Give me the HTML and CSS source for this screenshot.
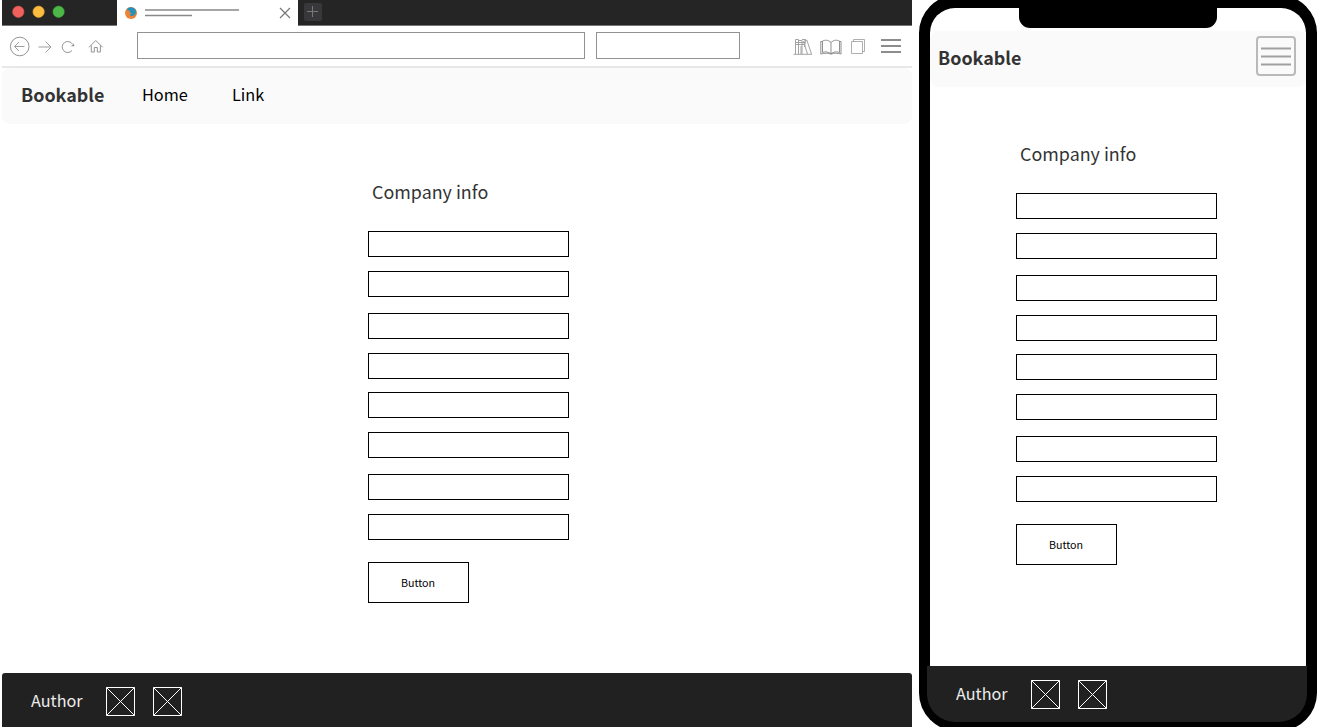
FILE: index.html
```html
<!DOCTYPE html>
<html lang="en">
<head>
<meta charset="utf-8">
<title>Bookable</title>
<link rel="stylesheet" href="styles.css">
</head>
<body>
<main class="board">
  <section class="browser">
    <div class="tabbar">
      <div class="lights">
        <svg width="60" height="26" viewBox="0 0 60 26"><circle cx="7.3" cy="11.8" r="5.7" fill="#f0605c" stroke="#d9534f" stroke-width=".6"/><circle cx="27.6" cy="11.8" r="5.7" fill="#fcbc40" stroke="#e0a132" stroke-width=".6"/><circle cx="47.6" cy="11.8" r="5.7" fill="#4db848" stroke="#3aa03a" stroke-width=".6"/></svg>
      </div>
      <div class="tab">
        <svg width="182" height="26" viewBox="0 0 182 26" fill="none">
          <circle cx="14" cy="13" r="6" fill="#ee8336"/>
          <path d="M10.500 8.200C13 6.500 16.500 7 18.200 9.200C19.600 11.200 19 14 17.300 15.300C15.500 16.600 13.300 16 12.600 14.800L14.800 13.500L12.500 12.300L13 10.800L10.300 10.300Z" fill="#2391bb"/>
          <path d="M28 10H122M28 15.500H75" stroke="#888" stroke-width="1.400"/>
          <path d="M163 8L173 18M173 8L163 18" stroke="#777" stroke-width="1.200"/>
        </svg>
      </div>
      <div class="newtab">
        <svg width="18" height="18" viewBox="0 0 18 18"><path d="M8.500 3V14M3 8.500H14" stroke="#77787a"/></svg>
      </div>
    </div>
    <div class="toolbar">
      <svg class="nav-icons" width="135" height="40" viewBox="0 0 135 40" fill="none" stroke="#929497">
        <circle cx="17.700" cy="20.500" r="9.300"/>
        <path d="M12.500 20.500H22.500M17 16L12.500 20.500L17 25M36.500 21H49M43.500 15.500L49 21L43.500 26.500" stroke-width=".9"/>
        <path d="M70.500 18.200A5.500 5.500 0 1 0 70 24.500"/><path d="M69 20.300H72.300L72 17.500Z" fill="#929497" stroke="none"/>
        <path d="M87 21.300L93.800 14.500L100.600 21.300M89.300 19.500V26H92.300V21.500H95.300V26H98.400V19.500"/>
      </svg>
      <div class="address"></div>
      <div class="search"></div>
      <svg class="tool-icons" width="171" height="40" viewBox="741 26 171 40" fill="none" stroke="#9a9a9a">
        <path d="M793.500 54.300H812M795.500 54V39.500H798.500V54M798.500 40.500H802V54M802 39.500H805.500L804.500 47M795.500 42.500H805.500M795.500 44.500H804M803.500 41.500L806.800 40L811.500 54M803.500 41.500L807.500 54M801 54V46" stroke-width=".9"/>
        <path d="M831 42.500V54M831 42.500C828 39.500 824.500 40 822.500 41V52.500C825.500 51.300 828.500 51.700 831 54C833.500 51.700 836.500 51.300 839.500 52.500V41C837.500 40 834 39.500 831 42.500ZM822.500 41.500H820.800V54C825 53 828 53 831 54M839.500 41.500H841V54C837 53 834 53 831 54" stroke="#858585" stroke-width=".9"/>
        <path d="M851.500 41.500H862.500V53.500H851.500ZM853.500 41.500V39.500H864.500V51.500H862.500" stroke-width=".8"/>
        <path d="M881 40H901M881 46H901M881 52H901" stroke="#68686a" stroke-width="1.600"/>
      </svg>
    </div>
    <header class="navbar">
      <strong class="brand">Bookable</strong>
      <a class="navlink home">Home</a>
      <a class="navlink link">Link</a>
    </header>
    <div class="content">
      <form class="form">
        <h1 class="title">Company info</h1>
        <div class="fields">
          <div class="field"></div><div class="field roomy"></div><div class="field"></div><div class="field tight"></div>
          <div class="field"></div><div class="field roomy"></div><div class="field"></div><div class="field"></div>
        </div>
        <div class="button">Button</div>
      </form>
    </div>
    <footer class="footer">
      <span class="author">Author</span>
      <svg class="placeholder" viewBox="0 0 29 29"><path d="M.5 .5H28.500V28.500H.5ZM.5 .5L28.500 28.500M28.500 .5L.5 28.500"/></svg>
      <svg class="placeholder" viewBox="0 0 29 29"><path d="M.5 .5H28.500V28.500H.5ZM.5 .5L28.500 28.500M28.500 .5L.5 28.500"/></svg>
    </footer>
  </section>
  <section class="phone">
    <div class="screen">
      <div class="notch"></div>
      <header class="navbar">
        <strong class="brand">Bookable</strong>
        <svg class="menu" width="40" height="40" viewBox="0 0 40 40" fill="none"><rect x="1" y="1" width="38" height="38" rx="3" stroke="#b9b9b9" stroke-width="2"/><path d="M5 12.500H35M5 20.500H35M5 28.500H35" stroke="#a0a0a0" stroke-width="2"/></svg>
      </header>
      <div class="content">
        <form class="form">
          <h1 class="title">Company info</h1>
          <div class="fields">
            <div class="field"></div><div class="field roomy"></div><div class="field"></div><div class="field tight"></div>
            <div class="field"></div><div class="field roomy"></div><div class="field"></div><div class="field"></div>
          </div>
          <div class="button">Button</div>
        </form>
      </div>
    </div>
    <footer class="footer">
      <span class="author">Author</span>
      <svg class="placeholder" viewBox="0 0 29 29"><path d="M.5 .5H28.500V28.500H.5ZM.5 .5L28.500 28.500M28.500 .5L.5 28.500"/></svg>
      <svg class="placeholder" viewBox="0 0 29 29"><path d="M.5 .5H28.500V28.500H.5ZM.5 .5L28.500 28.500M28.500 .5L.5 28.500"/></svg>
    </footer>
  </section>
</main>
</body>
</html>
```
FILE: styles.css
```css
* { box-sizing: border-box; }
body { margin: 0; background: #fff; overflow: hidden; font-family: "Noto Sans CJK SC", "Noto Sans", sans-serif; color: #000; }
svg { display: block; flex: none; }
.board { display: flex; gap: 7px; height: 727px; padding-left: 2px; overflow: hidden; }
.browser { width: 910px; flex: none; display: flex; flex-direction: column; }
.tabbar { display: flex; height: 26px; flex: none; background: #252525; border-bottom: 1px solid #777; }
.lights { width: 115px; padding-left: 9px; }
.tab { width: 181px; height: 26px; background: #fff; overflow: hidden; }
.newtab { width: 18px; height: 18px; margin: 3px 0 0 6px; background: #38383a; border-radius: 2px; }
.toolbar { display: flex; height: 42px; flex: none; border-bottom: 2px solid #e8e8e8; }
.address, .search { height: 27px; margin-top: 6px; border: 1px solid #929292; }
.address { width: 448px; }
.search { width: 144px; margin-left: 11px; }
.tool-icons { margin-left: auto; }
.navbar { display: flex; align-items: center; height: 56px; flex: none; background: #fafafa; border-radius: 8px; padding-left: 19px; }
.brand { font-size: 17.900px; line-height: 26px; padding-bottom: 4px; color: #333; width: 121px; }
.navlink { font-size: 16.300px; line-height: 26px; padding-bottom: 4px; }
.home { width: 90px; }
.form { width: 201px; margin: 0; }
.browser .form { margin: 54px 0 0 366px; }
.title { margin: 0; padding: 0 0 2px 4px; font-size: 17.900px; font-weight: 400; line-height: 26px; color: #333; }
.fields { display: flex; flex-direction: column; margin-top: 25px; }
.field { height: 26px; border: 1px solid #000; margin-bottom: 14px; }
.field.roomy { margin-bottom: 16px; }
.field.tight { margin-bottom: 13px; }
.field:last-child { margin-bottom: 0; }
.button { display: flex; align-items: center; justify-content: center; width: 101px; height: 41px; margin-top: 22px; padding-right: 1px; border: 1px solid #000; font-size: 10.700px; }
.footer { display: flex; align-items: center; background: #212121; color: #fff; }
.browser .footer { height: 54px; margin-top: auto; padding: 2px 0 0 29px; border-radius: 3px 3px 0 0; }
.author { width: 75px; padding-bottom: 2px; font-size: 16.200px; line-height: 26px; color: #ececec; }
.placeholder { width: 29px; height: 29px; margin-right: 18px; }
.placeholder path { fill: none; stroke: #fff; stroke-width: 1; }
.phone { width: 398px; height: 736px; margin-top: -5px; flex: none; padding: 13px 8px 0; background: #000; border-radius: 38px; }
.screen { width: 376px; height: 658px; margin-left: 3px; background: #fff; border-radius: 25px 25px 0 0; }
.notch { width: 198px; height: 20px; margin: 0 0 0 89px; background: #000; border-radius: 0 0 11px 11px; }
.phone .navbar { margin-top: 3px; padding: 0 10px 0 8px; }
.menu { margin: -6px 0 0 auto; }
.phone .form { margin: 53px 0 0 86px; }
.phone .footer { width: 380px; height: 56px; padding-left: 29px; border-radius: 0 0 28px 28px; }
```
